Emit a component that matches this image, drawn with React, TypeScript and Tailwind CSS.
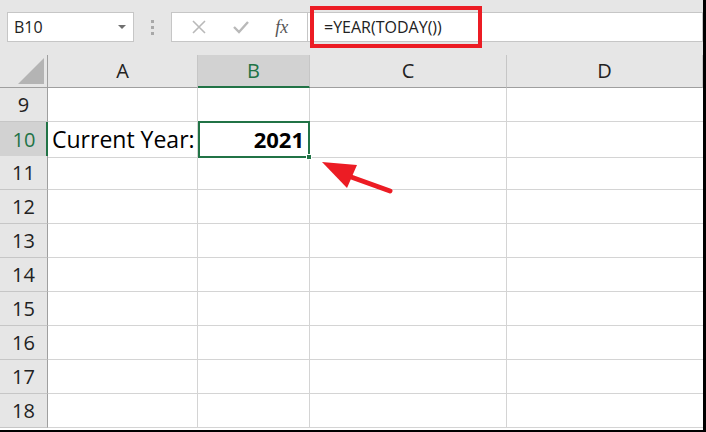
import React from "react";

const font = { fontFamily: '"Open Sans", "Noto Sans", sans-serif' };

const rows = [9, 10, 11, 12, 13, 14, 15, 16, 17, 18];
const cols = ["A", "B", "C", "D"];

function NameBox() {
  return (
    <div className="ml-[7px] flex h-[30px] w-[127px] items-center justify-between border border-[#c6c6c6] bg-white pl-[6px] pr-[7px]">
      <span className="text-[16px] text-[#222]">B10</span>
      <svg width="8" height="5" viewBox="0 0 8 5">
        <path d="M0 0 L8 0 L4 4 Z" fill="#6f6f6f" />
      </svg>
    </div>
  );
}

function FormulaButtons() {
  return (
    <div className="flex h-[30px] w-[137px] items-center justify-around border border-[#c6c6c6] bg-white px-[6px]">
      <svg width="16" height="16" viewBox="0 0 16 16">
        <path d="M2 2 L14 14 M14 2 L2 14" stroke="#b9b9b9" strokeWidth="1.6" fill="none" />
      </svg>
      <svg width="18" height="16" viewBox="0 0 18 16">
        <path d="M2 8 L7 13 L16 3" stroke="#b9b9b9" strokeWidth="2.4" fill="none" />
      </svg>
      <span
        className="text-[18px] italic text-[#555]"
        style={{ fontFamily: '"Liberation Serif", "DejaVu Serif", serif' }}
      >
        fx
      </span>
    </div>
  );
}

export default function App() {
  return (
    <div
      className="relative h-[432px] w-[706px] overflow-hidden border-r-[3px] border-b-2 border-black bg-white"
      style={font}
    >
      {/* toolbar */}
      <div className="relative flex h-[55px] items-center bg-[#e6e6e6] pb-[1px]">
        <NameBox />
        <div className="mx-[17px] flex flex-col gap-[3px]">
          <span className="h-[3px] w-[3px] bg-[#a8a8a8]" />
          <span className="h-[3px] w-[3px] bg-[#a8a8a8]" />
          <span className="h-[3px] w-[3px] bg-[#a8a8a8]" />
        </div>
        <FormulaButtons />
        <div className="flex h-[30px] flex-1 items-center border border-l-0 border-[#c6c6c6] bg-white pl-[16px]">
          <span className="text-[16px] text-[#222]">=YEAR(TODAY())</span>
        </div>
        <div className="absolute left-[310px] top-[6px] h-[42px] w-[172px] border-[4px] border-[#ec1c24]" />
      </div>

      {/* column headers */}
      <div className="grid h-[33px] grid-cols-[48px_150px_112px_197px_1fr] bg-[#e6e6e6]">
        <div className="relative border-r border-b border-[#9f9f9f]">
          <svg className="absolute right-[3px] bottom-[3px]" width="26" height="26" viewBox="0 0 26 26">
            <path d="M26 0 L26 26 L0 26 Z" fill="#b4b4b4" />
          </svg>
        </div>
        {cols.map((c) =>
          c === "B" ? (
            <div
              key={c}
              className="flex items-center justify-center border-r border-b-2 border-r-[#c6c6c6] border-b-[#217346] bg-[#d2d2d2] text-[20px] text-[#217346]"
            >
              {c}
            </div>
          ) : (
            <div
              key={c}
              className="flex items-center justify-center border-r border-b border-r-[#c6c6c6] border-b-[#9f9f9f] text-[20px] text-[#222]"
            >
              {c}
            </div>
          )
        )}
      </div>

      {/* rows */}
      {rows.map((r) => (
        <div key={r} className="grid h-[34px] grid-cols-[48px_150px_112px_197px_1fr]">
          {r === 10 ? (
            <div className="flex items-center justify-center border-r-2 border-b border-r-[#217346] border-b-[#c6c6c6] bg-[#d2d2d2] pl-[2px] text-[20px] text-[#217346]">
              {r}
            </div>
          ) : (
            <div className="flex items-center justify-center border-r border-b border-r-[#9f9f9f] border-b-[#c6c6c6] bg-[#e6e6e6] text-[20px] text-[#222]">
              {r}
            </div>
          )}
          <div className="flex items-center overflow-visible whitespace-nowrap border-r border-b border-[#d4d4d4] pl-[4px] text-[23px] text-black">
            {r === 10 ? "Current Year:" : ""}
          </div>
          {r === 10 ? (
            <div className="relative -mt-[1px] flex items-center justify-end border-2 border-[#217346] pr-[4px] text-[22px] font-bold text-black">
              2021
              <span className="absolute -right-[4px] -bottom-[4px] h-[6px] w-[6px] border border-white bg-[#217346]" />
            </div>
          ) : (
            <div className="border-r border-b border-[#d4d4d4]" />
          )}
          <div className="border-r border-b border-[#d4d4d4]" />
          <div className="border-b border-[#d4d4d4]" />
        </div>
      ))}

      {/* annotation arrow */}
      <svg className="pointer-events-none absolute left-0 top-0" width="706" height="432" viewBox="0 0 706 432">
        <path d="M390 191 L340 173" stroke="#ec1c24" strokeWidth="5" strokeLinecap="round" />
        <path d="M322 162 L357 165 L347 188 Z" fill="#ec1c24" />
      </svg>
    </div>
  );
}
